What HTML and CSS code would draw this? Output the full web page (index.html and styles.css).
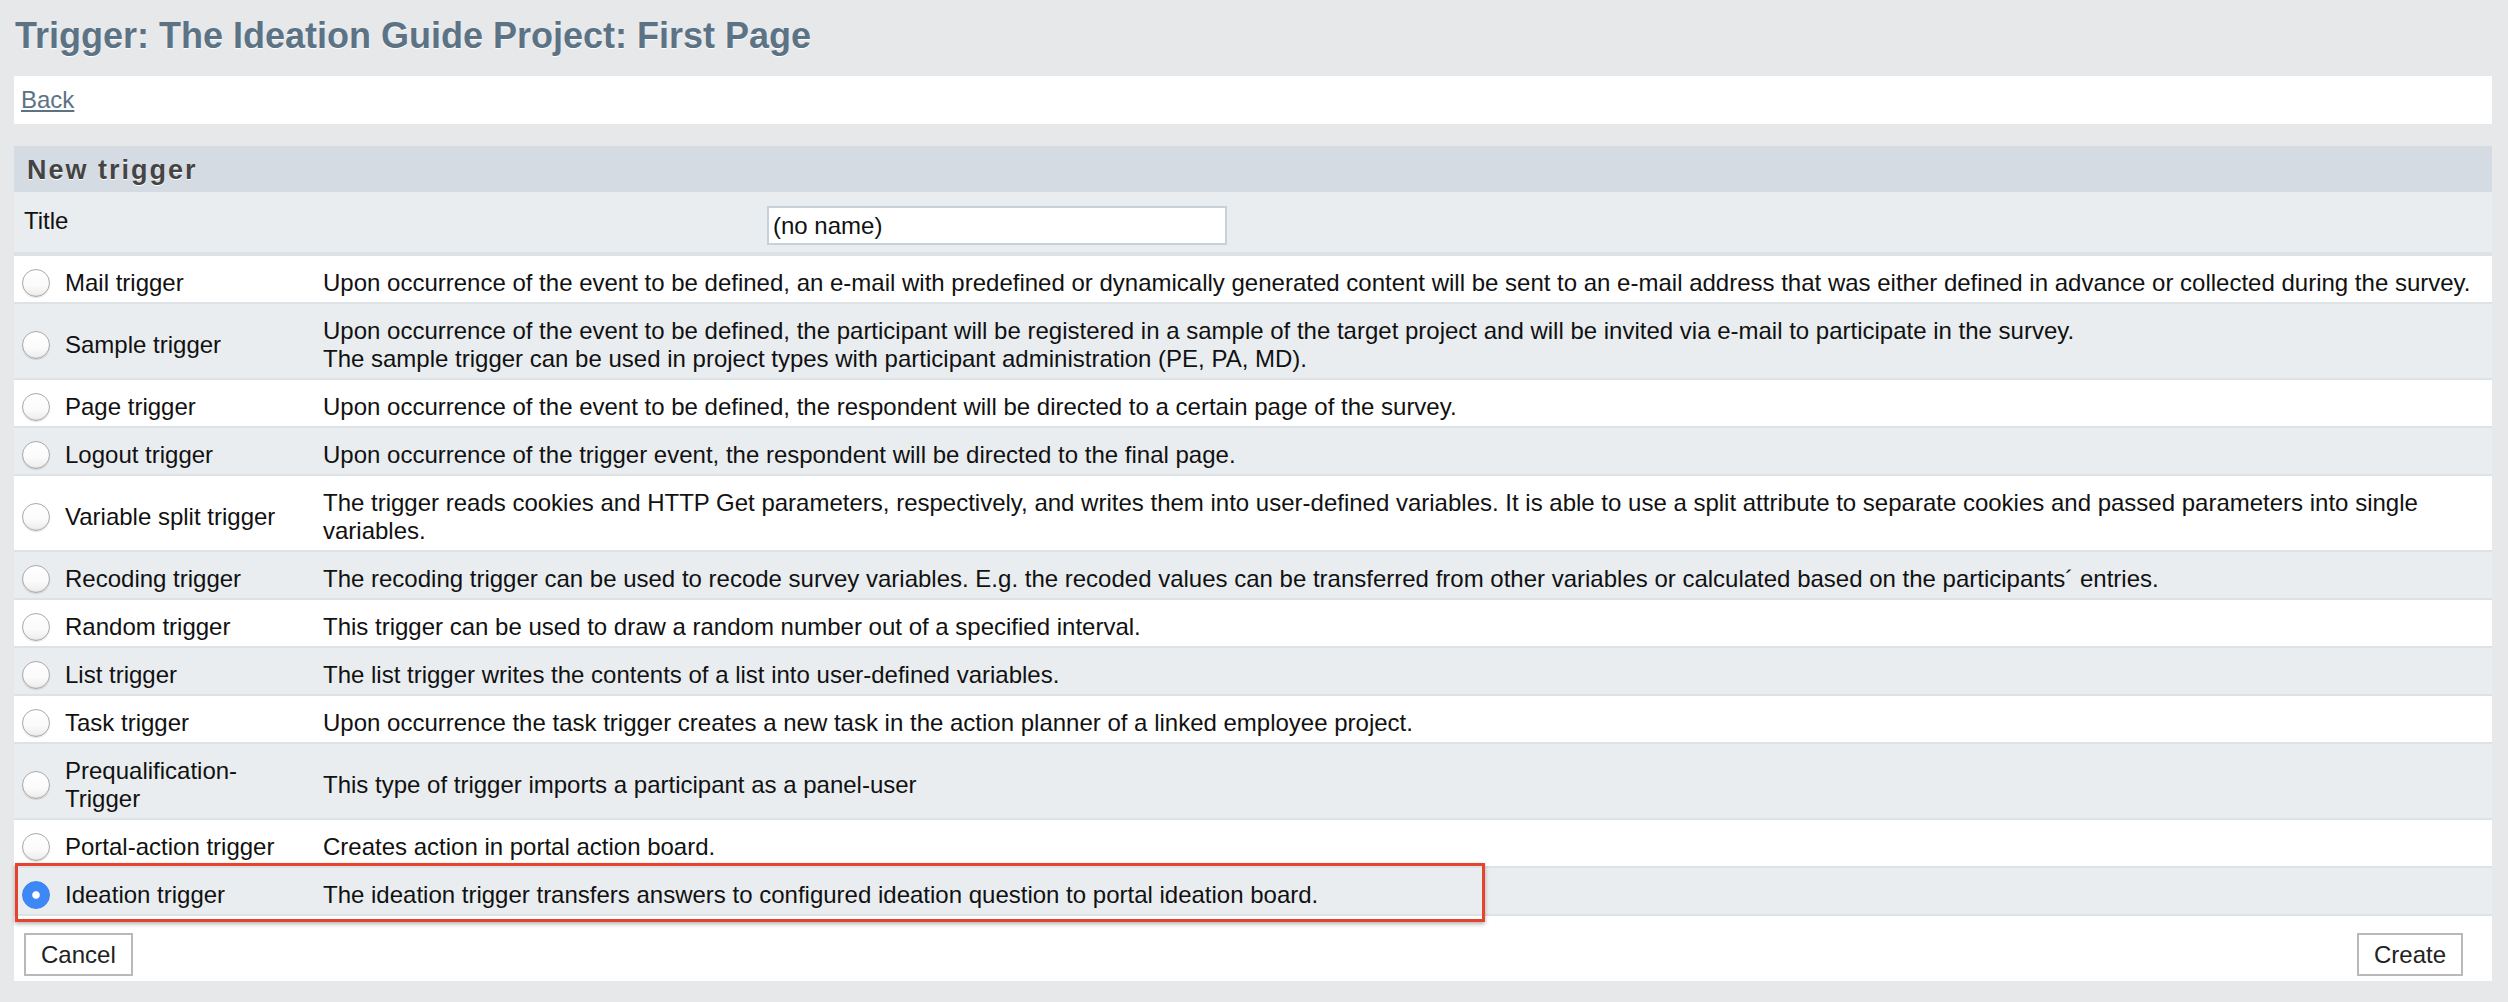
FILE: index.html
```html
<!DOCTYPE html>
<html lang="en">
<head>
<meta charset="utf-8">
<title>Trigger: The Ideation Guide Project: First Page</title>
<link rel="stylesheet" href="styles.css">
</head>
<body>
<div class="page">
  <h1 class="page-title">Trigger: The Ideation Guide Project: First Page</h1>
  <div class="backbar"><a href="#" class="back-link">Back</a></div>

  <form class="panel">
    <div class="section-head">New trigger</div>
    <div class="title-row">
      <div class="title-label">Title</div>
      <div><input class="name-input" type="text" value="(no name)"></div>
    </div>

    <label class="row white">
      <span class="rcell"><input type="radio" name="trigger" class="radio"></span>
      <span class="name">Mail trigger</span>
      <span class="desc">Upon occurrence of the event to be defined, an e-mail with predefined or dynamically generated content will be sent to an e-mail address that was either defined in advance or collected during the survey.</span>
    </label>
    <label class="row grey">
      <span class="rcell"><input type="radio" name="trigger" class="radio"></span>
      <span class="name">Sample trigger</span>
      <span class="desc">Upon occurrence of the event to be defined, the participant will be registered in a sample of the target project and will be invited via e-mail to participate in the survey.<br>The sample trigger can be used in project types with participant administration (PE, PA, MD).</span>
    </label>
    <label class="row white">
      <span class="rcell"><input type="radio" name="trigger" class="radio"></span>
      <span class="name">Page trigger</span>
      <span class="desc">Upon occurrence of the event to be defined, the respondent will be directed to a certain page of the survey.</span>
    </label>
    <label class="row grey">
      <span class="rcell"><input type="radio" name="trigger" class="radio"></span>
      <span class="name">Logout trigger</span>
      <span class="desc">Upon occurrence of the trigger event, the respondent will be directed to the final page.</span>
    </label>
    <label class="row white">
      <span class="rcell"><input type="radio" name="trigger" class="radio"></span>
      <span class="name">Variable split trigger</span>
      <span class="desc">The trigger reads cookies and HTTP Get parameters, respectively, and writes them into user-defined variables. It is able to use a split attribute to separate cookies and passed parameters into single variables.</span>
    </label>
    <label class="row grey">
      <span class="rcell"><input type="radio" name="trigger" class="radio"></span>
      <span class="name">Recoding trigger</span>
      <span class="desc">The recoding trigger can be used to recode survey variables. E.g. the recoded values can be transferred from other variables or calculated based on the participants´ entries.</span>
    </label>
    <label class="row white">
      <span class="rcell"><input type="radio" name="trigger" class="radio"></span>
      <span class="name">Random trigger</span>
      <span class="desc">This trigger can be used to draw a random number out of a specified interval.</span>
    </label>
    <label class="row grey">
      <span class="rcell"><input type="radio" name="trigger" class="radio"></span>
      <span class="name">List trigger</span>
      <span class="desc">The list trigger writes the contents of a list into user-defined variables.</span>
    </label>
    <label class="row white">
      <span class="rcell"><input type="radio" name="trigger" class="radio"></span>
      <span class="name">Task trigger</span>
      <span class="desc">Upon occurrence the task trigger creates a new task in the action planner of a linked employee project.</span>
    </label>
    <label class="row grey">
      <span class="rcell"><input type="radio" name="trigger" class="radio"></span>
      <span class="name">Prequalification-Trigger</span>
      <span class="desc">This type of trigger imports a participant as a panel-user</span>
    </label>
    <label class="row white">
      <span class="rcell"><input type="radio" name="trigger" class="radio"></span>
      <span class="name">Portal-action trigger</span>
      <span class="desc">Creates action in portal action board.</span>
    </label>
    <label class="row grey selected">
      <span class="rcell"><input type="radio" name="trigger" class="radio" checked></span>
      <span class="name">Ideation trigger</span>
      <span class="desc">The ideation trigger transfers answers to configured ideation question to portal ideation board.</span>
      <span class="highlight"></span>
    </label>

    <div class="footer">
      <button type="button" class="btn">Cancel</button>
      <button type="button" class="btn">Create</button>
    </div>
  </form>
</div>
</body>
</html>
```

FILE: styles.css
```css
html, body {
  margin: 0;
  padding: 0;
  background: #e6e8ea;
}

body {
  font-family: "Liberation Sans", Arial, Helvetica, sans-serif;
  font-size: 24px;
  color: #111;
}

.page {
  padding: 0 16px 0 14px;
}

.page-title {
  margin: 16px 0 0 0;
  padding-left: 1px;
  font-size: 36px;
  line-height: 40px;
  font-weight: bold;
  color: #5c7385;
  text-shadow: 0 1px 1px #ffffff;
}

.backbar {
  margin-top: 20px;
  background: #ffffff;
  height: 48px;
  box-sizing: border-box;
  padding: 10px 7px;
  line-height: 28px;
}

.back-link {
  color: #5c7385;
  text-decoration: underline;
}

.panel {
  margin: 22px 0 0 0;
}

.section-head {
  background: #d4dbe2;
  height: 46px;
  box-sizing: border-box;
  padding: 2px 0 0 13px;
  font-size: 27px;
  line-height: 44px;
  font-weight: bold;
  letter-spacing: 2px;
  color: #444444;
  text-shadow: 0 1px 0 #ffffff;
}

.title-row {
  display: grid;
  grid-template-columns: 753px 460px;
  align-items: start;
  height: 46px;
  padding-top: 14px;
  background: #e9edf0;
  border-bottom: 4px solid #dde2e6;
}

.title-label {
  padding: 1px 0 0 10px;
  line-height: 28px;
}

.name-input {
  display: block;
  width: 460px;
  height: 39px;
  box-sizing: border-box;
  margin: 0;
  border: 2px solid #c6d1da;
  padding: 0 4px;
  font-family: "Liberation Sans", Arial, Helvetica, sans-serif;
  font-size: 24px;
  color: #111;
  background: #ffffff;
  outline: none;
}

.row {
  display: grid;
  grid-template-columns: 51px 258px 1fr;
  align-items: center;
  padding: 13px 8px 5px 0;
  line-height: 28px;
  border-bottom: 2px solid #dde2e6;
  cursor: pointer;
}

.row.white {
  background: #ffffff;
}

.row.grey {
  background: #e9edf0;
}

.rcell {
  display: flex;
  align-items: center;
  height: 28px;
  padding-left: 8px;
}

.name {
  padding-right: 20px;
}

.radio {
  -webkit-appearance: none;
  appearance: none;
  display: block;
  width: 28px;
  height: 28px;
  margin: 0;
  border-radius: 50%;
  border: 1px solid #a9a9a9;
  background: linear-gradient(#ffffff 0%, #fbfbfb 60%, #ececec 100%);
  box-shadow: inset 0 -1px 1px rgba(0, 0, 0, 0.06), 0 1px 1px rgba(0, 0, 0, 0.1);
  box-sizing: border-box;
}

.radio:checked {
  border-color: #3a82ee;
  background: radial-gradient(circle, #ffffff 0, #ffffff 3.2px, #3d88f6 4.4px);
  box-shadow: none;
}

.row.selected {
  position: relative;
}

.highlight {
  position: absolute;
  left: 1px;
  top: -5px;
  width: 1470px;
  height: 59px;
  box-sizing: border-box;
  border: 3px solid #e5432d;
  box-shadow: 0 2px 4px rgba(0, 0, 0, 0.3);
  pointer-events: none;
}

.footer {
  display: flex;
  justify-content: space-between;
  align-items: flex-start;
  background: #ffffff;
  padding: 17px 29px 5px 10px;
}

.btn {
  height: 43px;
  box-sizing: border-box;
  padding: 0 15px;
  margin: 0;
  border: 2px solid #b9b9b9;
  background: #ffffff;
  font-family: "Liberation Sans", Arial, Helvetica, sans-serif;
  font-size: 24px;
  color: #222;
  border-radius: 0;
}
```
